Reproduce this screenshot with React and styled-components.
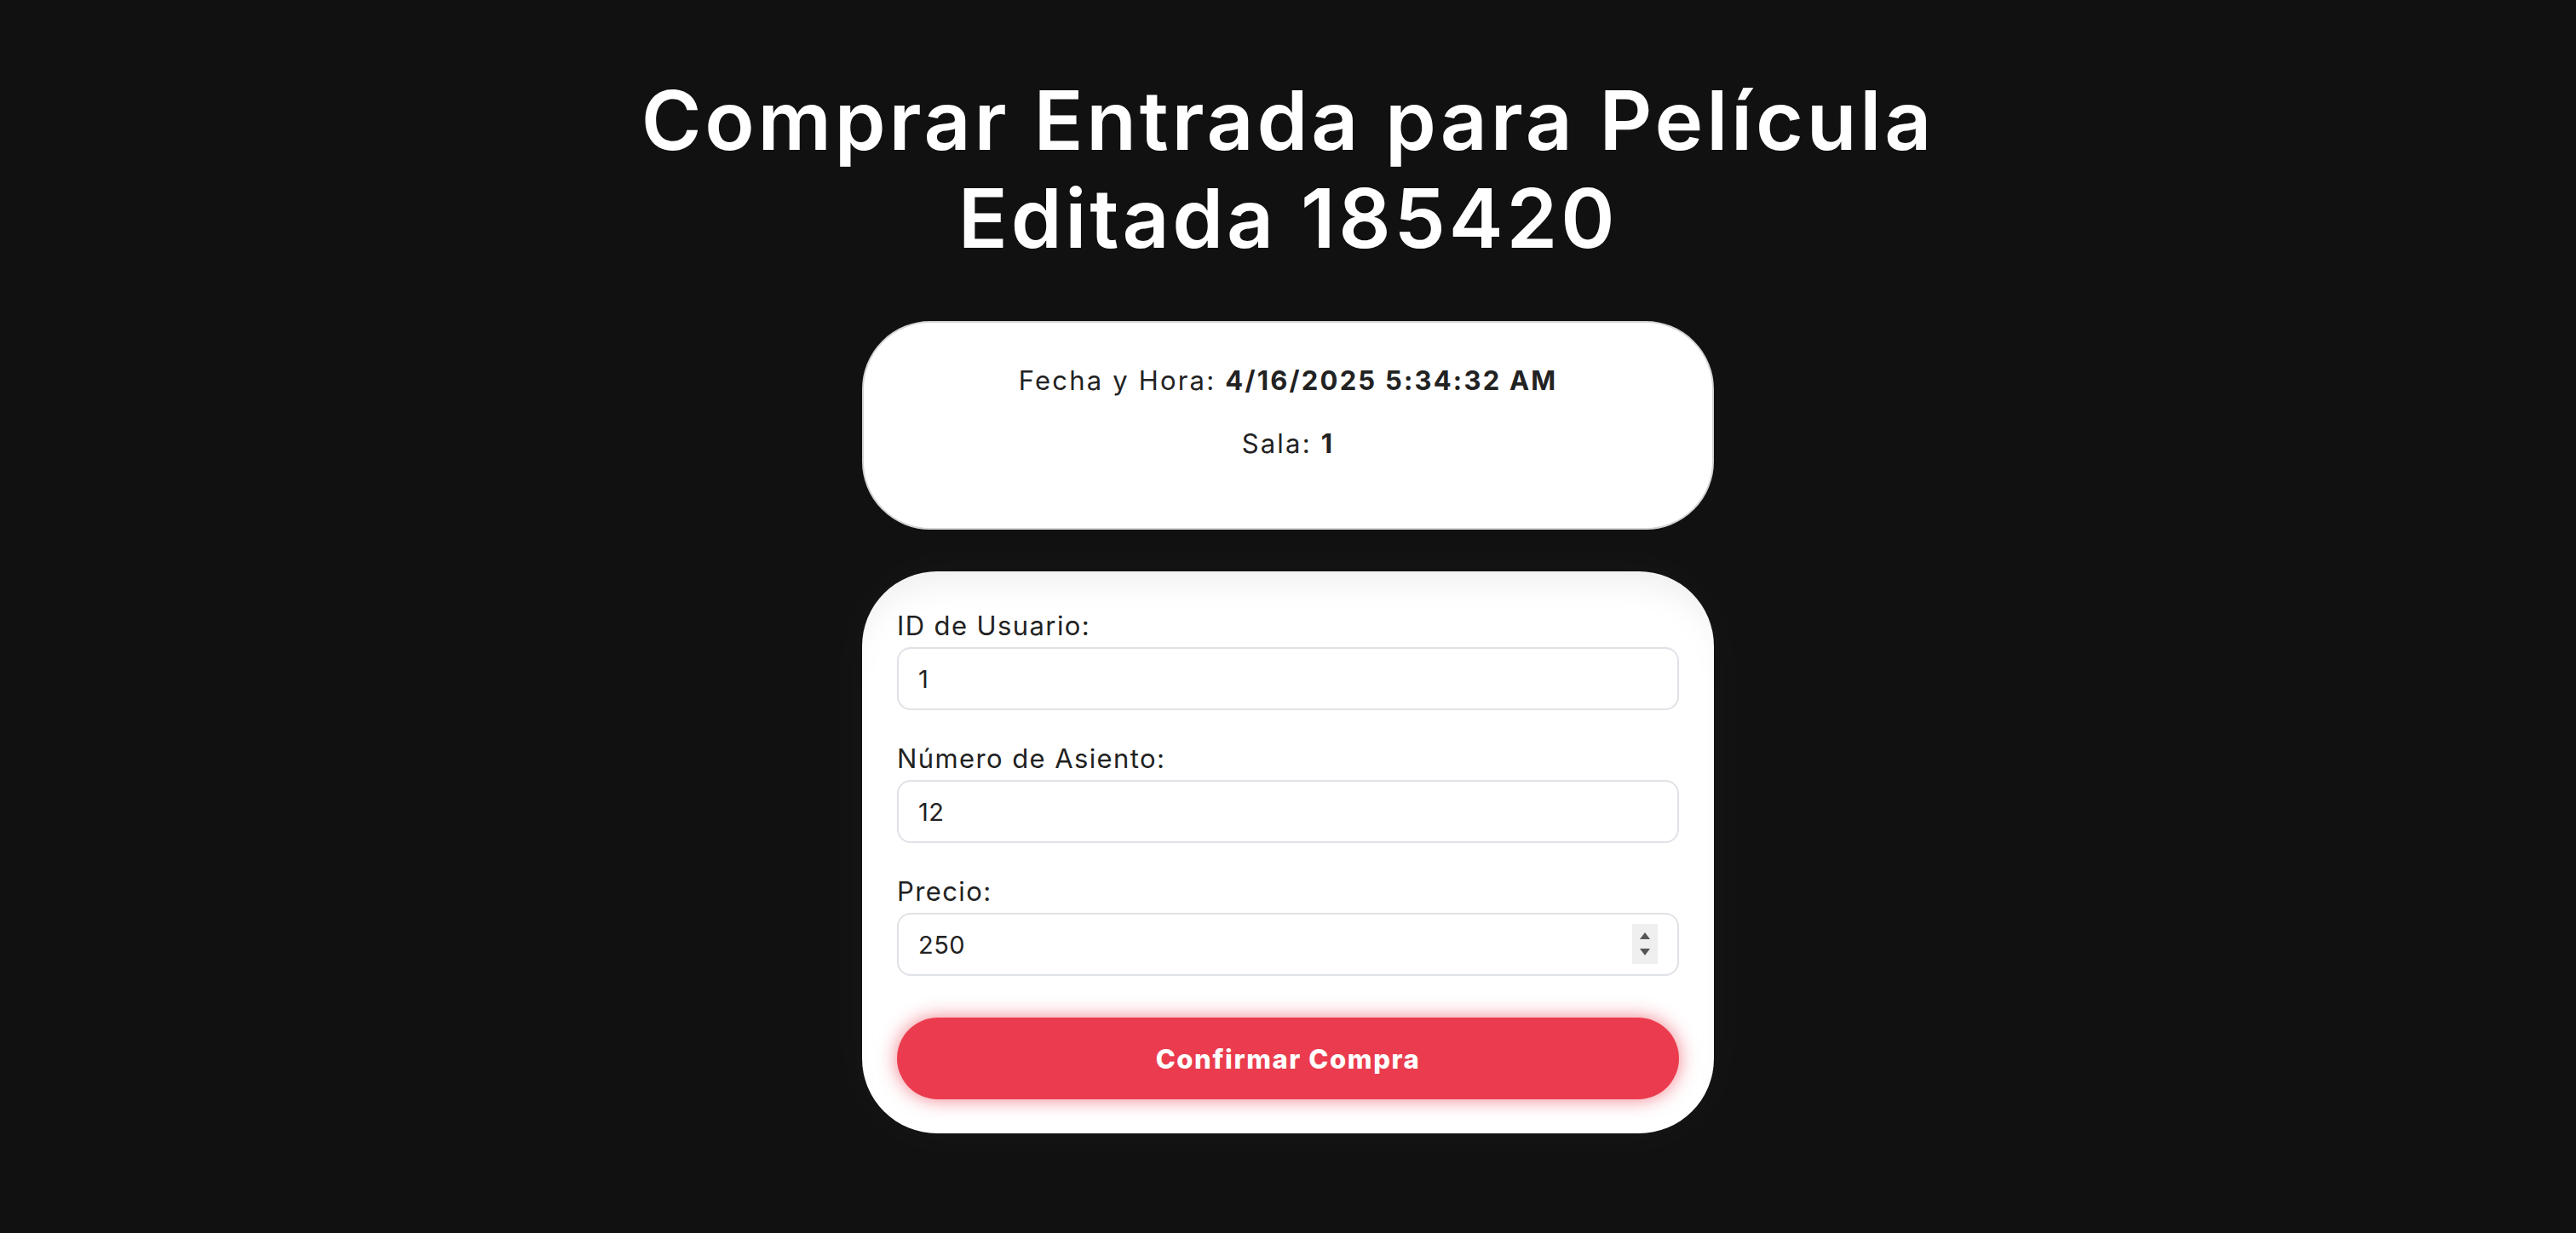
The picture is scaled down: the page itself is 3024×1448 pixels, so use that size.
import React from 'react';
import styled, { createGlobalStyle } from 'styled-components';

const GlobalStyle = createGlobalStyle`
  html, body {
    margin: 0;
    padding: 0;
    background-color: #111111;
  }

  body {
    font-family: 'Inter', 'Noto Sans', sans-serif;
    color: #222;
  }

  * {
    box-sizing: border-box;
  }
`;

const Page = styled.main`
  min-height: 1448px;
  display: flex;
  flex-direction: column;
  align-items: center;
  padding-top: 84px;
`;

const Title = styled.h1`
  margin: 0 0 63px;
  max-width: 1640px;
  text-align: center;
  color: #ffffff;
  font-size: 96px;
  line-height: 115px;
  font-weight: 600;
  letter-spacing: 3.8px;
`;

const InfoCard = styled.section`
  width: 1000px;
  display: flex;
  flex-direction: column;
  align-items: center;
  gap: 28px;
  padding: 45px 40px 76px;
  background-color: #ffffff;
  border: 2px solid #d4d4d4;
  border-radius: 80px;
`;

const InfoLine = styled.p`
  margin: 0;
  font-size: 31px;
  line-height: 46px;
  letter-spacing: 2.2px;
  color: #222;

  strong {
    font-weight: 700;
  }
`;

const FormCard = styled.form`
  width: 1000px;
  margin-top: 49px;
  display: flex;
  flex-direction: column;
  padding: 41px 41px 40px;
  background-color: #ffffff;
  border-radius: 88px;
  box-shadow: inset 0 30px 40px -18px rgba(0, 0, 0, 0.07),
    0 0 70px rgba(255, 255, 255, 0.03);
`;

const Field = styled.div`
  display: flex;
  flex-direction: column;
  margin-bottom: 34px;
`;

const Label = styled.label`
  font-size: 31px;
  line-height: 46px;
  margin-bottom: 2px;
  letter-spacing: 1.4px;
  color: #222;
`;

const InputWrap = styled.div`
  position: relative;
`;

const Input = styled.input`
  display: block;
  width: 100%;
  height: 74px;
  padding: 0 70px 0 23px;
  font-family: inherit;
  font-size: 29px;
  letter-spacing: 0.5px;
  color: #222;
  background-color: #ffffff;
  border: 2px solid #dfe2e6;
  border-radius: 16px;
  outline: none;
  caret-color: #000;
  -moz-appearance: textfield;

  &::-webkit-inner-spin-button,
  &::-webkit-outer-spin-button {
    -webkit-appearance: none;
    margin: 0;
  }
`;

const Spinner = styled.div`
  position: absolute;
  top: 13px;
  right: 25px;
  width: 30px;
  height: 47px;
  display: flex;
  flex-direction: column;
  align-items: center;
  justify-content: space-evenly;
  background-color: #efefef;
  pointer-events: none;
`;

const Arrow = styled.span`
  width: 0;
  height: 0;
  border-left: 6px solid transparent;
  border-right: 6px solid transparent;
  ${({ $down }) =>
    $down ? 'border-top: 8px solid #555;' : 'border-bottom: 8px solid #555;'}
`;

const SubmitButton = styled.button`
  margin-top: 15px;
  height: 96px;
  width: 100%;
  border: none;
  border-radius: 48px;
  background-color: #ea3c4e;
  color: #ffffff;
  font-family: inherit;
  font-size: 31px;
  font-weight: 800;
  letter-spacing: 1.6px;
  box-shadow: 0 0 22px rgba(234, 60, 78, 0.65);
  cursor: pointer;
`;

const App = () => (
  <>
    <GlobalStyle />
    <Page>
      <Title>Comprar Entrada para Película Editada 185420</Title>

      <InfoCard>
        <InfoLine>
          Fecha y Hora: <strong>4/16/2025 5:34:32 AM</strong>
        </InfoLine>
        <InfoLine>
          Sala: <strong>1</strong>
        </InfoLine>
      </InfoCard>

      <FormCard onSubmit={(e) => e.preventDefault()}>
        <Field>
          <Label htmlFor="usuario">ID de Usuario:</Label>
          <Input id="usuario" type="number" defaultValue="1" />
        </Field>
        <Field>
          <Label htmlFor="asiento">Número de Asiento:</Label>
          <Input id="asiento" type="number" defaultValue="12" />
        </Field>
        <Field>
          <Label htmlFor="precio">Precio:</Label>
          <InputWrap>
            <Input id="precio" type="number" defaultValue="250" autoFocus />
            <Spinner>
              <Arrow />
              <Arrow $down />
            </Spinner>
          </InputWrap>
        </Field>
        <SubmitButton type="submit">Confirmar Compra</SubmitButton>
      </FormCard>
    </Page>
  </>
);

export default App;
